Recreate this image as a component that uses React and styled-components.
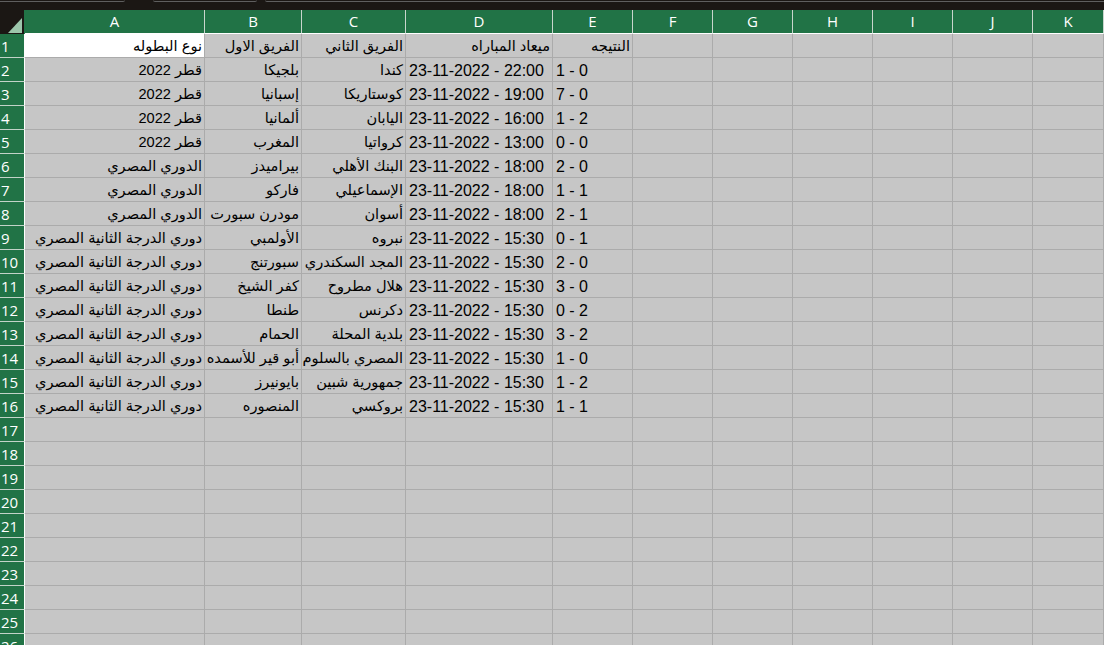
import React from "react";
import styled, { createGlobalStyle } from "styled-components";

const GREEN = "#217346";
const GRID = "#ababab";
const CELL = "#c6c6c6";

const GlobalStyle = createGlobalStyle`
  html, body { margin: 0; padding: 0; background: ${CELL}; overflow: hidden; }
  * { box-sizing: border-box; }
`;

const Screen = styled.div`
  display: flex;
  flex-direction: column;
  width: 100vw;
  height: 100vh;
  overflow: hidden;
  background: ${CELL};
`;

const TopBar = styled.div`
  height: 10px;
  flex: 0 0 10px;
  background: #1b1714;
  display: flex;
  align-items: flex-start;
`;

const TabEdge = styled.div`
  height: 2px;
  width: ${(p) => (p.$w ? `${p.$w}px` : "auto")};
  flex: ${(p) => (p.$w ? "0 0 auto" : "1 1 auto")};
  margin-left: ${(p) => p.$gap || 0}px;
  border-bottom: 1px solid #5f5f5f;
  border-bottom-left-radius: ${(p) => (p.$roundL ? "3px" : "0")};
  border-bottom-right-radius: ${(p) => (p.$roundR ? "3px" : "0")};
`;

const COLS = "25px 180px 97px 104px 147px repeat(6, 80px) 1fr";

const HeaderRow = styled.div`
  display: grid;
  grid-template-columns: ${COLS};
  height: 24px;
  flex: 0 0 24px;
  background: ${GREEN};
`;

const Corner = styled.div`
  background: #1b1714;
  border-right: 1px solid ${GREEN};
  display: flex;
  align-items: flex-end;
  justify-content: flex-end;
  padding: 0 2px 1px 0;
`;

const ColHeader = styled.div`
  border-right: 1px solid #c9d5cd;
  border-bottom: 1px solid #ffffff;
  color: #ffffff;
  font-family: "Open Sans", "Noto Sans", sans-serif;
  font-size: 15px;
  display: flex;
  align-items: center;
  justify-content: center;
  padding-bottom: 1px;
`;

const Row = styled.div`
  display: grid;
  grid-template-columns: ${COLS};
  height: 24px;
  flex: 0 0 24px;
`;

const RowNum = styled.div`
  background: ${GREEN};
  border-right: 1px solid #ffffff;
  border-bottom: 1px solid #c2d3c8;
  color: #ffffff;
  font-family: "Open Sans", "Noto Sans", sans-serif;
  font-size: 15px;
  display: flex;
  align-items: center;
  padding-left: 1px;
  overflow: hidden;
  white-space: nowrap;
`;

const Cell = styled.div`
  background: ${(p) => (p.$white ? "#ffffff" : CELL)};
  border-right: 1px solid ${GRID};
  border-bottom: 1px solid ${GRID};
  color: #000;
  font-family: "Liberation Sans", Arial, "DejaVu Sans", sans-serif;
  font-size: ${(p) => (p.$rtl ? "14.6px" : "16px")};
  direction: ${(p) => (p.$rtl ? "rtl" : "ltr")};
  display: flex;
  align-items: flex-end;
  justify-content: flex-start;
  padding: 0 2px 1px 3px;
  overflow: hidden;
  white-space: nowrap;
  line-height: 19px;
`;

const Triangle = () => (
  <svg width="14" height="15" viewBox="0 0 14 15">
    <polygon points="0,15 14,15 14,0" fill="#9cc6ab" />
  </svg>
);

const LETTERS = ["A", "B", "C", "D", "E", "F", "G", "H", "I", "J", "K"];

const CUP = "قطر 2022";
const EGY = "الدوري المصري";
const SEC = "دوري الدرجة الثانية المصري";

const DATA = [
  ["نوع البطوله", "الفريق الاول", "الفريق الثاني", "ميعاد المباراه", "النتيجه"],
  [CUP, "بلجيكا", "كندا", "23-11-2022 - 22:00", "1 - 0"],
  [CUP, "إسبانيا", "كوستاريكا", "23-11-2022 - 19:00", "7 - 0"],
  [CUP, "ألمانيا", "اليابان", "23-11-2022 - 16:00", "1 - 2"],
  [CUP, "المغرب", "كرواتيا", "23-11-2022 - 13:00", "0 - 0"],
  [EGY, "بيراميدز", "البنك الأهلي", "23-11-2022 - 18:00", "2 - 0"],
  [EGY, "فاركو", "الإسماعيلي", "23-11-2022 - 18:00", "1 - 1"],
  [EGY, "مودرن سبورت", "أسوان", "23-11-2022 - 18:00", "2 - 1"],
  [SEC, "الأولمبي", "نبروه", "23-11-2022 - 15:30", "0 - 1"],
  [SEC, "سبورتنج", "المجد السكندري", "23-11-2022 - 15:30", "2 - 0"],
  [SEC, "كفر الشيخ", "هلال مطروح", "23-11-2022 - 15:30", "3 - 0"],
  [SEC, "طنطا", "دكرنس", "23-11-2022 - 15:30", "0 - 2"],
  [SEC, "الحمام", "بلدية المحلة", "23-11-2022 - 15:30", "3 - 2"],
  [SEC, "أبو قير للأسمده", "المصري بالسلوم", "23-11-2022 - 15:30", "1 - 0"],
  [SEC, "بايونيرز", "جمهورية شبين", "23-11-2022 - 15:30", "1 - 2"],
  [SEC, "المنصوره", "بروكسي", "23-11-2022 - 15:30", "1 - 1"],
];

const TOTAL_ROWS = 27;

export default function App() {
  const rows = Array.from({ length: TOTAL_ROWS }, (_, i) => DATA[i] || []);
  return (
    <Screen>
      <GlobalStyle />
      <TopBar>
        <TabEdge $w={125} $roundR />
        <TabEdge $w={104} $gap={28} $roundL $roundR />
        <TabEdge $gap={8} $roundL />
      </TopBar>
      <HeaderRow>
        <Corner>
          <Triangle />
        </Corner>
        {LETTERS.map((l) => (
          <ColHeader key={l}>{l}</ColHeader>
        ))}
      </HeaderRow>
      {rows.map((r, i) => (
        <Row key={i}>
          <RowNum>{i + 1}</RowNum>
          {LETTERS.map((l, c) => {
            const v = r[c] || "";
            const rtl = i === 0 || c < 3;
            return (
              <Cell key={l} $rtl={rtl} $white={i === 0 && c === 0}>
                {v}
              </Cell>
            );
          })}
        </Row>
      ))}
    </Screen>
  );
}
